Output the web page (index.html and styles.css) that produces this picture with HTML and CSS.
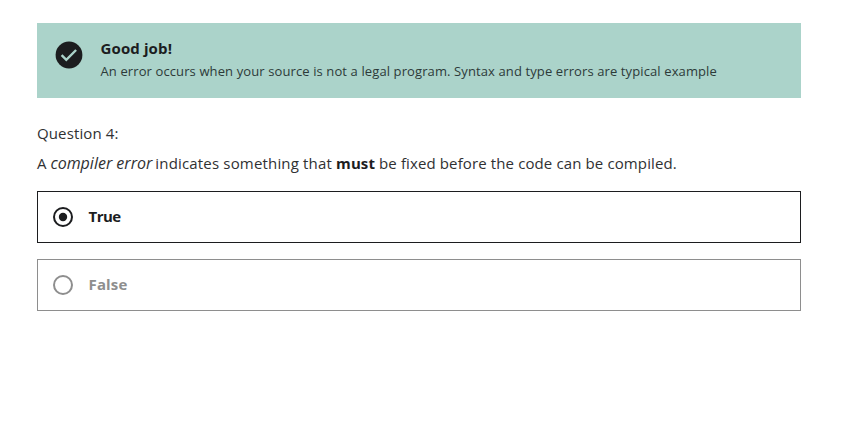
FILE: index.html
```html
<!DOCTYPE html>
<html lang="en">
<head>
<meta charset="utf-8">
<title>Quiz</title>
<link rel="stylesheet" href="styles.css">
</head>
<body>
<main class="quiz">
  <section class="feedback">
    <svg class="check" viewBox="0 0 28 28" width="28" height="28"><circle cx="14" cy="14" r="13.4" fill="#1c1d1f"/><path d="M6.6 14.1l4.7 4.7 9.8-9.8" fill="none" stroke="#abd3ca" stroke-width="2.4"/></svg>
    <div class="message">
      <h1 class="title">Good job!</h1>
      <p class="detail">An error occurs when your source is not a legal program. Syntax and type errors are typical example</p>
    </div>
  </section>
  <p class="number">Question 4:</p>
  <p class="prompt"><span>A </span><em>compiler error</em><span class="after"> indicates something that </span><strong>must</strong><span class="end"> be fixed before the code can be compiled.</span></p>
  <div class="options">
    <label class="option selected"><svg class="radio" viewBox="0 0 20 20" width="20" height="20"><circle cx="10" cy="10" r="9" fill="none" stroke="currentColor" stroke-width="2"/><circle cx="10" cy="10" r="4.2" fill="currentColor"/></svg><span class="label-true">True</span></label>
    <label class="option"><svg class="radio" viewBox="0 0 20 20" width="20" height="20"><circle cx="10" cy="10" r="9" fill="none" stroke="currentColor" stroke-width="2"/></svg><span class="label-false">False</span></label>
  </div>
</main>
</body>
</html>
```

FILE: styles.css
```css
* { box-sizing: border-box; }
body { margin: 0; background: #fff; color: #1c1d1f; font: 15px/24px "Open Sans", "Noto Sans", sans-serif; }
h1, p { margin: 0; }
.quiz { width: 764px; margin: 23px 0 0 37px; }
.feedback { display: flex; height: 75px; padding: 13px 18px; background: #abd3ca; }
.check { margin: 5px 17.5px 0 0; flex: none; }
.message { white-space: nowrap; }
.title { font-size: 15px; line-height: 24px; font-weight: 700; letter-spacing: .12px; }
.detail { margin-top: 1px; font-size: 13px; line-height: 20px; letter-spacing: .11px; color: #2d3a39; }
.number { margin-top: 23px; letter-spacing: .12px; color: #303133; }
.prompt { height: 24px; margin-top: 6px; white-space: nowrap; color: #303133; }
.prompt em { font-size: 16px; line-height: 20px; }
.prompt .after { margin-left: -1px; letter-spacing: .17px; }
.prompt strong { letter-spacing: .1px; color: #1c1d1f; }
.prompt .end { letter-spacing: .12px; }
.options { display: grid; gap: 16px; margin-top: 16px; }
.option { display: flex; align-items: center; gap: 16px; height: 52px; padding: 0 0 0 15px; border: 1px solid #8e8e8e; color: #8e8e8e; font-weight: 700; }
.option span { margin: -2px 0 0 -.5px; }
.label-true { letter-spacing: -.5px; }
.label-false { letter-spacing: .15px; }
.selected { border-color: #1c1d1f; color: #1c1d1f; }
```
